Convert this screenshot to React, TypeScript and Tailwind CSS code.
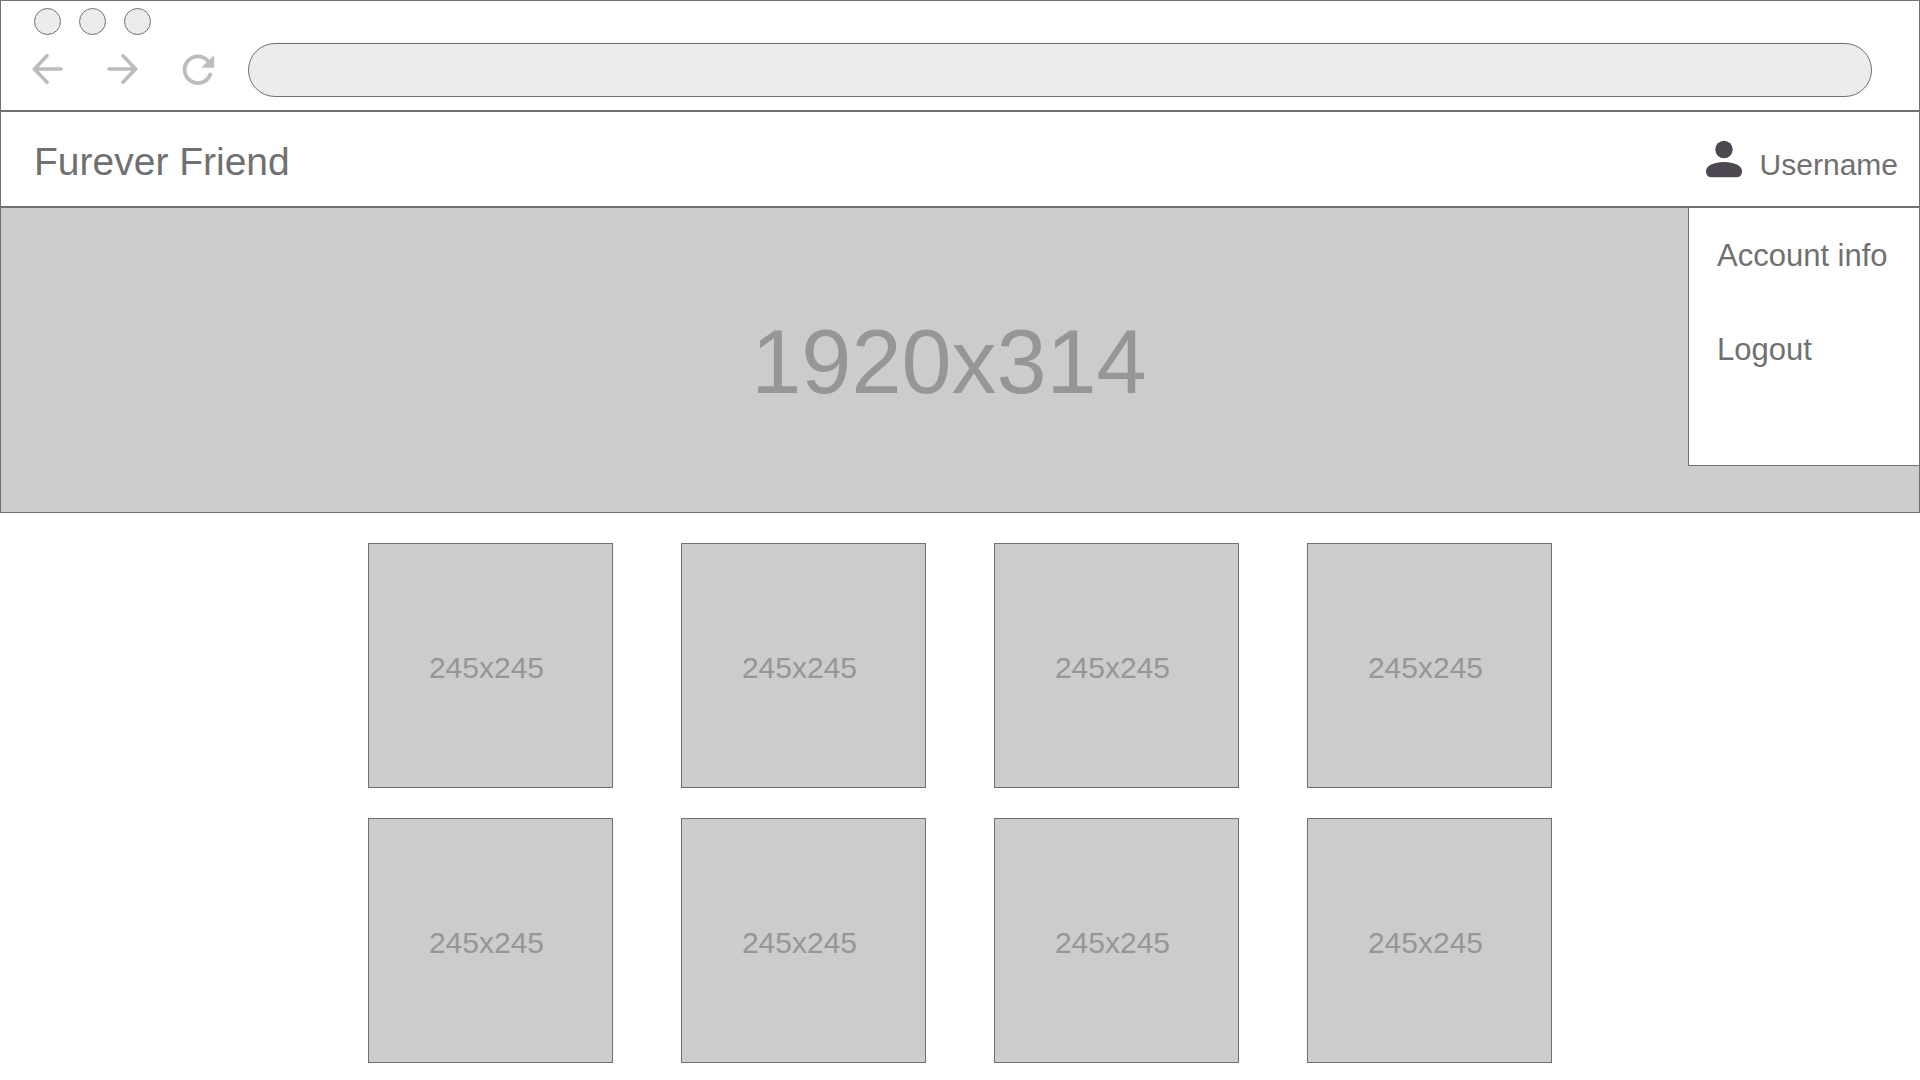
const windowButtons = ["Close window", "Minimize window", "Maximize window"];

const menuItems = ["Account info", "Logout"];

const cards = Array.from({ length: 8 }, (_, index) => index);

function BackIcon() {
  return (
    <svg width="32" height="32" viewBox="0 0 32 32" fill="none" stroke="#bbbcbe" strokeWidth="3.6" strokeLinecap="round" aria-hidden="true">
      <path d="M15 1.800 2.500 15 15 28.200M3 15H29" />
    </svg>
  );
}

function ForwardIcon() {
  return (
    <svg width="32" height="32" viewBox="0 0 32 32" fill="none" stroke="#bbbcbe" strokeWidth="3.6" strokeLinecap="round" aria-hidden="true">
      <path d="M16 1.800 28.500 15 16 28.200M28 15H2" />
    </svg>
  );
}

function ReloadIcon() {
  return (
    <svg width="34" height="32" viewBox="0 0 34 32" fill="none" aria-hidden="true">
      <path d="M28.300 20.500A13.300 13.300 0 1 1 25.500 6.500" stroke="#bbbcbe" strokeWidth="3.8" strokeLinecap="round" />
      <path d="M32.200 1V13.800H19.300Z" fill="#bbbcbe" />
    </svg>
  );
}

function UserIcon() {
  return (
    <svg width="36" height="38" viewBox="0 0 36 38" fill="#4d4751" aria-hidden="true">
      <circle cx="18" cy="9.500" r="8.700" />
      <path d="M0 31C0 25.500 8 22 18 22S36 25.500 36 31C36 34.800 34 37.200 31 37.200H5C2 37.200 0 34.800 0 31Z" />
    </svg>
  );
}

function BrowserBar() {
  return (
    <div className="border-b-2 border-[#707070] pb-[13px] pt-[7px]">
      <div className="flex gap-[18px] pl-[33px]">
        {windowButtons.map((label) => (
          <button key={label} aria-label={label} className="size-[27px] rounded-full border border-[#707070] bg-[#edebec]" />
        ))}
      </div>
      <div className="mt-2 flex items-center pl-[31px] pr-[47px]">
        <button aria-label="Back" className="mr-[43px] shrink-0">
          <BackIcon />
        </button>
        <button aria-label="Forward" className="mr-[43px] shrink-0">
          <ForwardIcon />
        </button>
        <button aria-label="Reload" className="mr-8 shrink-0">
          <ReloadIcon />
        </button>
        <input
          type="text"
          aria-label="Address"
          className="h-[54px] min-w-0 flex-1 rounded-full border border-[#707070] bg-[#edebec] px-7 text-2xl text-[#707070] outline-none"
        />
      </div>
    </div>
  );
}

function SiteHeader() {
  return (
    <header className="flex h-24 items-center justify-between border-b-2 border-[#707070] pl-[33px] pr-[21px]">
      <h1 className="pt-1.5 text-[39px] leading-[48px]">Furever Friend</h1>
      <button className="flex items-center gap-[18px] text-[30px] leading-9">
        <UserIcon />
        <span className="pt-3">Username</span>
      </button>
    </header>
  );
}

function Hero() {
  return (
    <section className="relative flex h-[304px] items-center justify-center bg-[#cccccc] pr-[22px]">
      <span className="pt-1 text-[90px] leading-[120px] text-[#969696]">1920x314</span>
      <nav
        aria-label="Account"
        className="absolute right-0 top-0 flex w-[231px] flex-col items-start gap-[58px] border-b border-l border-[#707070] bg-white pb-[97px] pl-7 pt-[30px]"
      >
        {menuItems.map((item) => (
          <a key={item} href="#" className="whitespace-nowrap text-[31px] leading-9">
            {item}
          </a>
        ))}
      </nav>
    </section>
  );
}

export default function App() {
  return (
    <div className="min-h-screen bg-white pb-[17px] font-['Liberation_Sans',Arial,sans-serif] text-[#707070]">
      <div className="border border-[#707070]">
        <BrowserBar />
        <SiteHeader />
        <Hero />
      </div>
      <main className="mx-auto mt-[30px] flex max-w-[1184px] flex-wrap justify-center gap-x-[68px] gap-y-[30px]">
        {cards.map((card) => (
          <a
            key={card}
            href="#"
            className="flex size-[245px] items-center justify-center border border-[#707070] bg-[#cccccc] pr-2 pt-1 text-[30px] leading-10 text-[#969696]"
          >
            245x245
          </a>
        ))}
      </main>
    </div>
  );
}
